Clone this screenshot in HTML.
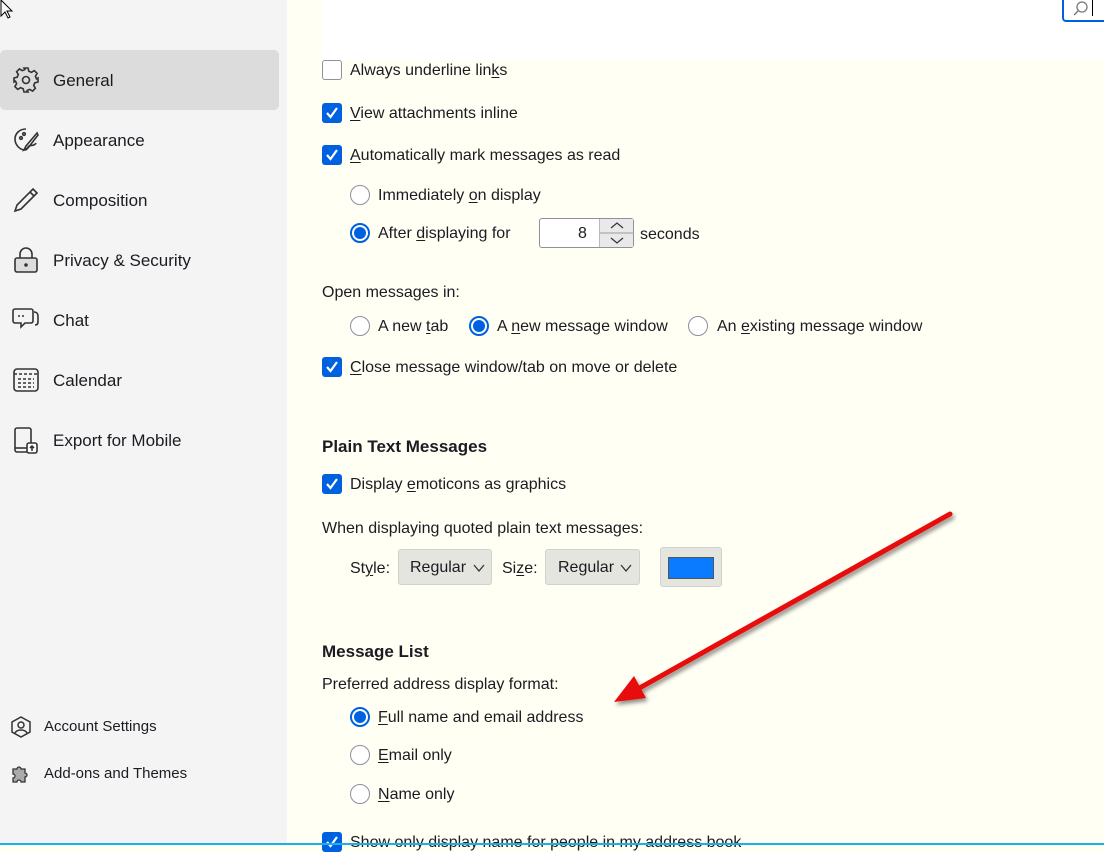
<!DOCTYPE html>
<html><head><meta charset="utf-8"><style>
*{margin:0;padding:0;box-sizing:border-box}
body{width:1104px;height:845px;overflow:hidden;position:relative;background:#fffff4;font-family:"Liberation Sans",sans-serif;color:#1c1b22;font-size:16px}
.side{position:absolute;left:0;top:0;width:287px;height:845px;background:#f4f4f4}
.nav{position:absolute;left:0;width:279px;height:60px;display:flex;align-items:center;font-size:17px}
.nav svg{position:absolute;left:12px;top:16px}
.nav span{position:absolute;left:53px;top:21px}
.sel{background:#dcdcdc;border-radius:5px}
.bn{position:absolute;left:10px;font-size:15px}
.bn span{position:absolute;left:34px;top:2px;white-space:nowrap}
.t{position:absolute;white-space:nowrap;margin-top:1px}
.cb{position:absolute;width:20px;height:20px;border-radius:3px;background:#0061e0}
.cb.off{background:#fff;border:1px solid #8f8f9d}
.cb svg{position:absolute;left:3px;top:3px}
.rd{position:absolute;width:20px;height:20px;border-radius:50%;border:1px solid #8f8f9d;background:#fff}
.rd.on{border:2px solid #0061e0}
.rd.on::after{content:"";position:absolute;left:2px;top:2px;width:12px;height:12px;border-radius:50%;background:#0061e0}
.h{font-weight:bold;font-size:17px}
.btn{position:absolute;background:#e5e5e0;border:1px solid #d2d2cc;border-radius:3px}
u{text-decoration:underline;text-underline-offset:2px}
</style></head><body>
<div class="side">
 <div class="nav sel" style="top:50px"><svg width="28" height="28" viewBox="0 0 28 28" fill="none" stroke="#333" stroke-width="1.6"><path d="M12 2h4l.8 3.2 2.6 1.1 2.9-1.7 2.8 2.8-1.7 2.9 1.1 2.6L26 12v4l-3.2.8-1.1 2.6 1.7 2.9-2.8 2.8-2.9-1.7-2.6 1.1L16 26h-4l-.8-3.2-2.6-1.1-2.9 1.7-2.8-2.8 1.7-2.9-1.1-2.6L2 16v-4l3.2-.8 1.1-2.6-1.7-2.9 2.8-2.8 2.9 1.7 2.6-1.1z"/><circle cx="14" cy="14" r="3.5"/></svg><span>General</span></div>
 <div class="nav" style="top:110px"><svg width="28" height="28" viewBox="0 0 28 28" fill="none" stroke="#333" stroke-width="1.6"><path d="M14 3C7 3 3 8 3 13c0 6 5 11 10 11 3 0 2-3 4-4 2-1 6 0 7-3"/><circle cx="9" cy="12" r="1.3"/><circle cx="12" cy="8" r="1.3"/><path d="M25 7L14 20l-2 4 4-2L26 9z"/></svg><span>Appearance</span></div>
 <div class="nav" style="top:170px"><svg width="28" height="28" viewBox="0 0 28 28" fill="none" stroke="#333" stroke-width="1.6"><path d="M21 3l4 4L9 23l-6 2 2-6z M18 6l4 4"/></svg><span>Composition</span></div>
 <div class="nav" style="top:230px"><svg width="28" height="28" viewBox="0 0 28 28" fill="none" stroke="#333" stroke-width="1.6"><path d="M8 12V8a6 6 0 0 1 12 0v4"/><rect x="3" y="12" width="22" height="14" rx="2" fill="#ddd"/><circle cx="14" cy="19" r="1" fill="#333"/></svg><span>Privacy &amp; Security</span></div>
 <div class="nav" style="top:290px"><svg width="28" height="28" viewBox="0 0 28 28" fill="none" stroke="#333" stroke-width="1.6"><path d="M3 3h16a2 2 0 0 1 2 2v10a2 2 0 0 1-2 2H13l-4 4v-4H3a2 2 0 0 1-2-2V5a2 2 0 0 1 2-2z"/><path d="M22 6c3 0 4 2 4 4v6c0 2-1 3-3 3"/><path d="M6 10h8" stroke-dasharray="2 2"/></svg><span>Chat</span></div>
 <div class="nav" style="top:350px"><svg width="28" height="28" viewBox="0 0 28 28" fill="none" stroke="#333" stroke-width="1.6"><rect x="2" y="3" width="24" height="22" rx="3"/><path d="M2 8h24M6 13h16M6 17h16M6 21h16" stroke-dasharray="3 2"/></svg><span>Calendar</span></div>
 <div class="nav" style="top:410px"><svg width="28" height="30" viewBox="0 0 28 30" fill="none" stroke="#333" stroke-width="1.6"><rect x="3" y="2" width="16" height="24" rx="2"/><path d="M3 22h12"/><rect x="15" y="17" width="10" height="10" rx="2" fill="#fff"/><path d="M20 25v-5M18 22l2-2 2 2"/></svg><span>Export for Mobile</span></div>
 <div class="bn" style="top:716px"><svg width="22" height="22" viewBox="0 0 22 22" fill="none" stroke="#333" stroke-width="1.5"><path d="M11 1l9 5v10l-9 5-9-5V6z"/><circle cx="11" cy="9" r="3"/><path d="M5 17c2-4 10-4 12 0"/></svg><span>Account Settings</span></div>
 <div class="bn" style="top:763px"><svg width="22" height="22" viewBox="0 0 22 22" fill="#aaa" stroke="#333" stroke-width="1.3"><path d="M3 6h4a2 2 0 1 1 4 0h4v4a2 2 0 1 1 0 4v5h-4a2 2 0 1 0-4 0H3v-4a2 2 0 1 0 0-4z"/></svg><span>Add-ons and Themes</span></div>
</div>
<div style="position:absolute;left:322px;top:0;width:782px;height:60px;background:#fff"></div>
<div style="position:absolute;left:1062px;top:-4px;width:50px;height:26px;border:2px solid #0061e0;border-radius:4px;background:#fff"><svg width="18" height="18" style="position:absolute;left:8px;top:2px" viewBox="0 0 18 18" fill="none" stroke="#777" stroke-width="1.3"><circle cx="10" cy="7" r="5"/><path d="M6 11l-4 4"/></svg><div style="position:absolute;left:28px;top:2px;width:1px;height:16px;background:#000"></div></div>

<div class="cb off" style="left:322px;top:60px"></div><div class="t" style="left:350px;top:61px">Always underline lin<u>k</u>s</div>
<div class="cb" style="left:322px;top:103px"><svg width="14" height="14" viewBox="0 0 14 14" fill="none" stroke="#fff" stroke-width="2.2"><path d="M2 7l3.5 4L12 2"/></svg></div><div class="t" style="left:350px;top:104px"><u>V</u>iew attachments inline</div>
<div class="cb" style="left:322px;top:145px"><svg width="14" height="14" viewBox="0 0 14 14" fill="none" stroke="#fff" stroke-width="2.2"><path d="M2 7l3.5 4L12 2"/></svg></div><div class="t" style="left:350px;top:146px"><u>A</u>utomatically mark messages as read</div>
<div class="rd" style="left:350px;top:185px"></div><div class="t" style="left:378px;top:186px">Immediately <u>o</u>n display</div>
<div class="rd on" style="left:350px;top:223px"></div><div class="t" style="left:378px;top:224px">After <u>d</u>isplaying for</div>
<div style="position:absolute;left:539px;top:218px;width:95px;height:30px;border:1px solid #8f8f9d;border-radius:3px;background:#fff"><span style="position:absolute;left:38px;top:6px">8</span><div style="position:absolute;left:59px;top:0;width:34px;height:28px;background:#e9e9e9;border-left:1px solid #bbb"><svg width="34" height="28" viewBox="0 0 34 28" fill="none" stroke="#333" stroke-width="1.2"><path d="M11 9l6-5 6 5M11 19l6 5 6-5"/><path d="M0 14h34" stroke="#aaa"/></svg></div></div>
<div class="t" style="left:640px;top:225px">seconds</div>

<div class="t" style="left:322px;top:283px">Open messages in:</div>
<div class="rd" style="left:350px;top:316px"></div><div class="t" style="left:378px;top:317px">A new <u>t</u>ab</div>
<div class="rd on" style="left:469px;top:316px"></div><div class="t" style="left:497px;top:317px">A <u>n</u>ew message window</div>
<div class="rd" style="left:688px;top:316px"></div><div class="t" style="left:717px;top:317px">An <u>e</u>xisting message window</div>
<div class="cb" style="left:322px;top:357px"><svg width="14" height="14" viewBox="0 0 14 14" fill="none" stroke="#fff" stroke-width="2.2"><path d="M2 7l3.5 4L12 2"/></svg></div><div class="t" style="left:350px;top:358px"><u>C</u>lose message window/tab on move or delete</div>

<div class="t h" style="left:322px;top:436px">Plain Text Messages</div>
<div class="cb" style="left:322px;top:474px"><svg width="14" height="14" viewBox="0 0 14 14" fill="none" stroke="#fff" stroke-width="2.2"><path d="M2 7l3.5 4L12 2"/></svg></div><div class="t" style="left:350px;top:475px">Display <u>e</u>moticons as graphics</div>
<div class="t" style="left:322px;top:519px">When displaying quoted plain text messages:</div>
<div class="t" style="left:350px;top:559px">St<u>y</u>le:</div>
<div class="btn" style="left:398px;top:549px;width:94px;height:36px"><span style="position:absolute;left:11px;top:9px">Regular</span><svg width="12" height="8" style="position:absolute;left:74px;top:14px" fill="none" stroke="#333" stroke-width="1.3"><path d="M1 1l5 6 5-6"/></svg></div>
<div class="t" style="left:502px;top:559px">Si<u>z</u>e:</div>
<div class="btn" style="left:545px;top:549px;width:95px;height:36px"><span style="position:absolute;left:12px;top:9px">Regular</span><svg width="12" height="8" style="position:absolute;left:74px;top:14px" fill="none" stroke="#333" stroke-width="1.3"><path d="M1 1l5 6 5-6"/></svg></div>
<div class="btn" style="left:660px;top:547px;width:62px;height:40px"><div style="position:absolute;left:7px;top:9px;width:46px;height:22px;background:#0a7aff;border:1px solid #555"></div></div>

<div class="t h" style="left:322px;top:641px">Message List</div>
<div class="t" style="left:322px;top:675px">Preferred address display format:</div>
<div class="rd on" style="left:350px;top:707px"></div><div class="t" style="left:378px;top:708px"><u>F</u>ull name and email address</div>
<div class="rd" style="left:350px;top:745px"></div><div class="t" style="left:378px;top:746px"><u>E</u>mail only</div>
<div class="rd" style="left:350px;top:784px"></div><div class="t" style="left:378px;top:785px"><u>N</u>ame only</div>
<div class="cb" style="left:322px;top:832px"><svg width="14" height="14" viewBox="0 0 14 14" fill="none" stroke="#fff" stroke-width="2.2"><path d="M2 7l3.5 4L12 2"/></svg></div><div class="t" style="left:350px;top:833px">Show only display name for people in my address book</div>
<div style="position:absolute;left:0;top:843px;width:1104px;height:2px;background:#1ab0e8"></div>

<svg style="position:absolute;left:0;top:0" width="1104" height="845">
<defs><filter id="s"><feDropShadow dx="2" dy="3" stdDeviation="2" flood-opacity=".45"/></filter></defs>
<g filter="url(#s)"><path d="M950 514L636 690" stroke="#e80d0d" stroke-width="5" stroke-linecap="round"/><path d="M614 702L634 676L646 698Z" fill="#e80d0d"/></g>
<path d="M1 0v16l4-4 3 6 2-1-3-6h5z" fill="#fff" stroke="#000" stroke-width="1"/>
</svg>
</body></html>
